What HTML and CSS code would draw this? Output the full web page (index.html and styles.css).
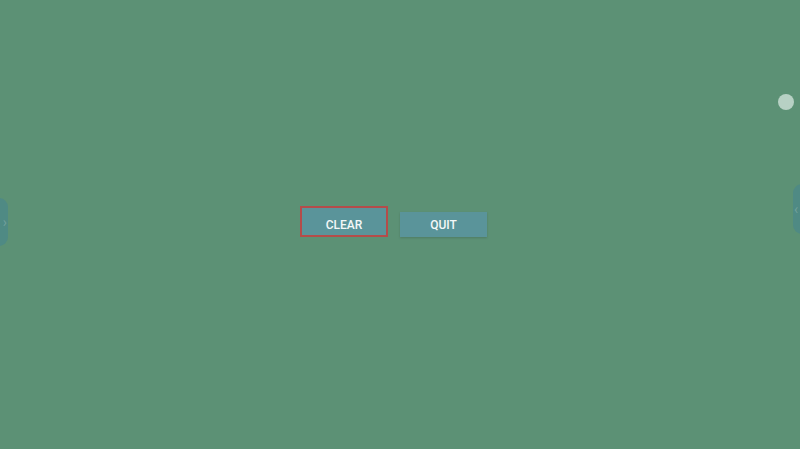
FILE: index.html
```html
<!DOCTYPE html>
<html>
<head>
<meta charset="utf-8">
<link rel="stylesheet" href="styles.css">
</head>
<body>
<div class="stage">
  <div class="actions">
    <button class="btn btn-focused">CLEAR</button>
    <button class="btn">QUIT</button>
  </div>
  <div class="handle handle-left"><span class="chev">›</span></div>
  <div class="handle handle-right"><span class="chev">‹</span></div>
  <div class="dot"></div>
</div>
</body>
</html>
```
FILE: styles.css
```css
html, body {
  margin: 0;
  padding: 0;
}
body {
  width: 800px;
  height: 449px;
  overflow: hidden;
  background: #5c9175;
  font-family: Roboto, "Liberation Sans", sans-serif;
}
.stage {
  position: relative;
  width: 800px;
  height: 449px;
}
.actions {
  display: flex;
  justify-content: center;
  align-items: flex-end;
  gap: 12px;
  padding-top: 206px;
  padding-right: 13px;
}
.btn {
  box-sizing: border-box;
  width: 87px;
  height: 25px;
  border: none;
  margin: 0;
  padding: 0;
  background: #5a949a;
  color: #f4f8f8;
  font-family: Roboto, "Liberation Sans", sans-serif;
  font-weight: 500;
  font-size: 12px;
  letter-spacing: 0;
  box-shadow: 0 1px 2px rgba(0,0,0,0.15);
}
.btn-focused {
  width: 88px;
  height: 31px;
  border: 2px solid #b44c4a;
  padding-top: 6px;
  box-shadow: none;
}
.handle {
  position: absolute;
  width: 18px;
  height: 48px;
  border-radius: 9px;
  background: #4f8a84;
  display: flex;
  align-items: center;
  color: rgba(255,255,255,0.2);
  font-size: 14px;
}
.handle-left {
  left: -11px;
  top: 198px;
  justify-content: flex-end;
  padding-right: 1px;
}
.handle-right {
  right: -12px;
  top: 184px;
  height: 50px;
  justify-content: flex-start;
  padding-left: 1px;
}
.dot {
  position: absolute;
  left: 778px;
  top: 94px;
  width: 16px;
  height: 16px;
  border-radius: 50%;
  background: #b7d1c4;
}
```
